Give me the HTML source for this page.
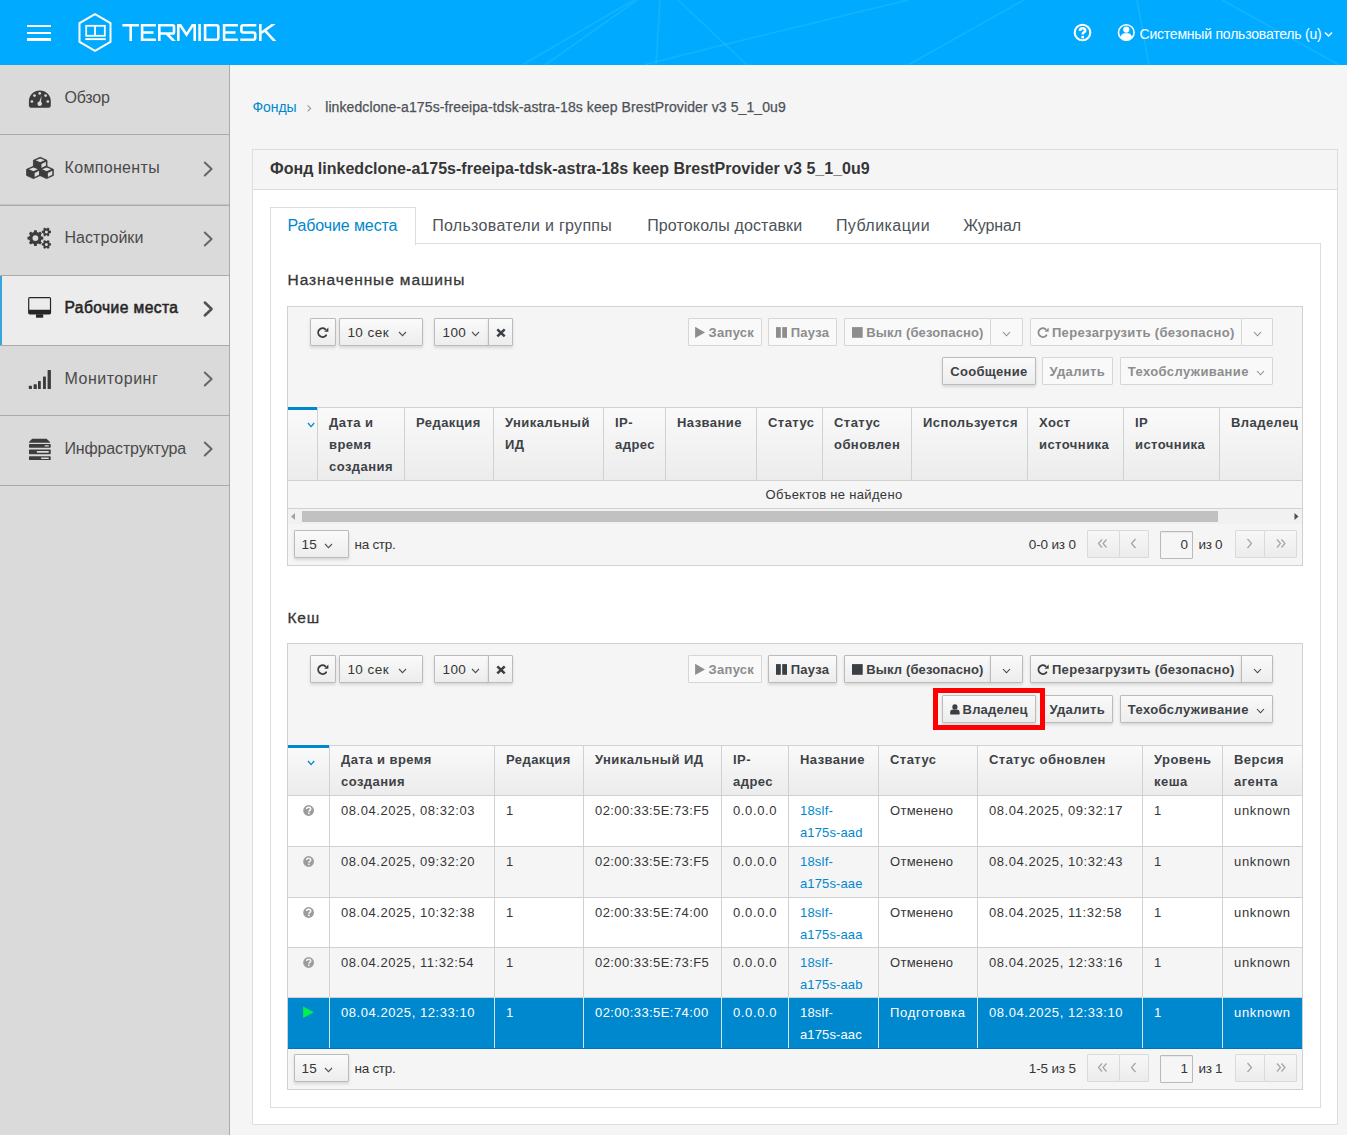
<!DOCTYPE html><html><head><meta charset="utf-8"><title>Termidesk</title><style>
*{box-sizing:border-box}
html,body{margin:0;padding:0}
body{width:1347px;height:1135px;overflow:hidden;position:relative;background:#f5f5f5;font-family:"Liberation Sans",sans-serif;color:#363636}
.t{position:absolute;white-space:nowrap;line-height:20px}
.btn{position:absolute;border:1px solid #bbb;border-radius:1px;background:linear-gradient(#fafafa,#ededed);box-shadow:0 2px 3px rgba(0,0,0,.12)}
.dis{position:absolute;border:1px solid #d6d6d6;border-radius:1px;background:#f9f9f9}
svg{position:absolute;overflow:visible}
</style></head><body>
<div style="position:absolute;left:0px;top:0px;width:1347px;height:65px;background:#00aaff"></div>
<svg style="left:0;top:0" width="1347" height="65"><g stroke="#30c4ff" stroke-opacity="0.4" stroke-width="1.6" fill="none"><line x1="522" y1="65" x2="634" y2="0"/><line x1="545" y1="65" x2="637" y2="0"/><line x1="660" y1="0" x2="656" y2="65"/><line x1="678" y1="0" x2="747" y2="65"/><polyline points="643,65 723,45 908,0"/><line x1="908" y1="65" x2="1024" y2="0"/><line x1="1137" y1="0" x2="1149" y2="65"/><line x1="1222" y1="0" x2="1339" y2="65"/></g></svg>
<div style="position:absolute;left:27px;top:25px;width:24px;height:2px;background:#fff"></div>
<div style="position:absolute;left:27px;top:32px;width:24px;height:2px;background:#fff"></div>
<div style="position:absolute;left:27px;top:38.2px;width:24px;height:2.7px;background:#fff"></div>
<svg style="left:0;top:0" width="300" height="65"><polygon points="95,14.2 110.5,23.1 110.5,41.9 95,50.8 79.5,41.9 79.5,23.1" fill="none" stroke="#fff" stroke-width="2" stroke-linejoin="round"/><rect x="86.2" y="25.8" width="18.6" height="10" fill="none" stroke="#fff" stroke-width="1.8"/><line x1="95" y1="25.8" x2="95" y2="35.8" stroke="#fff" stroke-width="1.8"/><rect x="85.3" y="38.2" width="20.4" height="1.9" fill="#fff"/><defs><clipPath id="lc"><rect x="120" y="24" width="160" height="17"/></clipPath></defs><g clip-path="url(#lc)" fill="none" stroke="#fff" stroke-width="2.6" stroke-linejoin="miter" stroke-miterlimit="6" stroke-linecap="butt"><path d="M122.4 25.3 H138.9 M130.7 25.3 V41"/><path d="M155.9 25.3 H142.1 V39.7 H155.9 M142.1 32.5 H153.5"/><path d="M159.3 41 V25.3 H172.5 Q174 25.3 174 27 V31.9 Q174 33.5 172.5 33.5 H159.3 M166.5 33.5 L175 42"/><path d="M178.3 42 V22 L186.5 34.6 L194.7 22 V42"/><path d="M199.6 24 V41"/><path d="M205.1 25.3 H216.5 Q218.3 25.3 218.3 27.2 V37.8 Q218.3 39.7 216.5 39.7 H205.1 Z"/><path d="M237.9 25.3 H224.1 V39.7 H237.9 M224.1 32.5 H235.5"/><path d="M256.3 25.3 H243.3 Q241.4 25.3 241.4 27.2 V30.8 Q241.4 32.5 243.3 32.5 H253.3 Q255.2 32.5 255.2 34.4 V37.8 Q255.2 39.7 253.3 39.7 H240.3"/><path d="M260.3 24 V41 M261 33 L274.5 23.5 M265 30.6 L275.5 42"/></g></svg>
<svg style="left:1072px;top:22px" width="22" height="22"><circle cx="10.5" cy="10.5" r="7.8" fill="none" stroke="#fff" stroke-width="2.1"/><path d="M8 8.9 Q8 6.2 10.6 6.2 Q13.2 6.2 13.2 8.4 Q13.2 9.7 11.8 10.4 Q10.7 11 10.7 12.5" fill="none" stroke="#fff" stroke-width="2.6"/><rect x="9.4" y="13.9" width="2.6" height="2.4" fill="#fff"/></svg>
<svg style="left:1116px;top:22px" width="22" height="22"><circle cx="10.3" cy="10.5" r="7.8" fill="none" stroke="#fff" stroke-width="1.6"/><circle cx="10.3" cy="7.6" r="3.1" fill="#fff"/><path d="M4.6 15.6 Q5.2 11.6 8.2 11.2 H12.4 Q15.4 11.6 16 15.6 Q13.6 18.4 10.3 18.4 Q7 18.4 4.6 15.6 Z" fill="#fff"/></svg>
<div class="t" style="left:1139.5px;top:24px;font-size:14px;color:#fff;letter-spacing:-0.21px;">Системный пользователь (u)</div>
<svg style="left:1324px;top:31px" width="10" height="8"><path d="M1 1.5 L4.5 5 L8 1.5" fill="none" stroke="#fff" stroke-width="1.5"/></svg>
<div style="position:absolute;left:0px;top:65px;width:229px;height:1070px;background:#dadada"></div>
<div style="position:absolute;left:229px;top:65px;width:1px;height:1070px;background:#aaaaaa"></div>
<div style="position:absolute;left:0px;top:276px;width:229px;height:69px;background:#ececec"></div>
<div style="position:absolute;left:0px;top:276px;width:2px;height:69px;background:#39a5dc"></div>
<div style="position:absolute;left:0px;top:134px;width:229px;height:1px;background:#aaaaaa"></div>
<div style="position:absolute;left:0px;top:205px;width:229px;height:1px;background:#aaaaaa"></div>
<div style="position:absolute;left:0px;top:275px;width:229px;height:1px;background:#aaaaaa"></div>
<div style="position:absolute;left:0px;top:345px;width:229px;height:1px;background:#aaaaaa"></div>
<div style="position:absolute;left:0px;top:415px;width:229px;height:1px;background:#aaaaaa"></div>
<div style="position:absolute;left:0px;top:485px;width:229px;height:1px;background:#aaaaaa"></div>
<div style="position:absolute;left:0px;top:204px;width:229px;height:1px;background:#c4c4c4"></div>
<div class="t" style="left:64.5px;top:88px;font-size:16px;color:#4a4a4a;letter-spacing:-0.2px;">Обзор</div>
<div class="t" style="left:64.5px;top:158px;font-size:16px;color:#4a4a4a;letter-spacing:0.33px;">Компоненты</div>
<svg style="left:203px;top:161px" width="12" height="16"><path d="M1.8 1.5 L8.6 8 L1.8 14.5" fill="none" stroke="#63676b" stroke-width="2" stroke-linecap="round" stroke-linejoin="round"/></svg>
<div class="t" style="left:64.5px;top:228px;font-size:16px;color:#4a4a4a;letter-spacing:0.05px;">Настройки</div>
<svg style="left:203px;top:231px" width="12" height="16"><path d="M1.8 1.5 L8.6 8 L1.8 14.5" fill="none" stroke="#63676b" stroke-width="2" stroke-linecap="round" stroke-linejoin="round"/></svg>
<div class="t" style="left:64.5px;top:298px;font-size:15.6px;color:#262626;letter-spacing:0.42px;-webkit-text-stroke:0.55px #262626;">Рабочие места</div>
<svg style="left:203px;top:301px" width="12" height="16"><path d="M1.8 1.5 L8.6 8 L1.8 14.5" fill="none" stroke="#4d5258" stroke-width="2.5" stroke-linecap="round" stroke-linejoin="round"/></svg>
<div class="t" style="left:64.5px;top:369px;font-size:16px;color:#4a4a4a;letter-spacing:0.5px;">Мониторинг</div>
<svg style="left:203px;top:371px" width="12" height="16"><path d="M1.8 1.5 L8.6 8 L1.8 14.5" fill="none" stroke="#63676b" stroke-width="2" stroke-linecap="round" stroke-linejoin="round"/></svg>
<div class="t" style="left:64.5px;top:439px;font-size:16px;color:#4a4a4a;letter-spacing:-0.15px;">Инфраструктура</div>
<svg style="left:203px;top:441px" width="12" height="16"><path d="M1.8 1.5 L8.6 8 L1.8 14.5" fill="none" stroke="#63676b" stroke-width="2" stroke-linecap="round" stroke-linejoin="round"/></svg>
<svg style="left:28px;top:89px" width="24" height="20"><path d="M0.9 12.35 A10.95 10.95 0 0 1 22.8 12.35 V16.6 Q22.8 18.8 20.6 18.8 H3.1 Q0.9 18.8 0.9 16.6 Z" fill="#3c3c3c"/><g fill="#dadada"><circle cx="11.7" cy="4.4" r="1.35"/><circle cx="6.5" cy="6.6" r="1.35"/><circle cx="17.6" cy="6.6" r="1.35"/><circle cx="3.9" cy="12.5" r="1.35"/><circle cx="19.8" cy="12.5" r="1.35"/><circle cx="11.7" cy="14.8" r="2.3"/><path d="M10.6 14.4 L13.6 6.6 L12.8 15.3 Z"/></g></svg>
<svg style="left:22px;top:152px" width="36" height="30"><path d="M18.2 5.2 L25.0 8.3 V14.5 L18.2 17.6 L11.399999999999999 14.5 V8.3 Z" fill="#3c3c3c" stroke="#3c3c3c" stroke-width="0.8" stroke-linejoin="round"/><path d="M18.2 6.45 L22.7 8.3 L18.2 10.15 L13.7 8.3 Z" fill="#dcdcdc"/><path d="M19.45 11.950000000000001 L23.9 9.75 V13.8 L19.45 16.0 Z" fill="#dcdcdc"/><path d="M11.4 14.2 L18.2 17.3 V23.5 L11.4 26.599999999999998 L4.6000000000000005 23.5 V17.3 Z" fill="#3c3c3c" stroke="#3c3c3c" stroke-width="0.8" stroke-linejoin="round"/><path d="M11.4 15.45 L15.899999999999999 17.3 L11.4 19.15 L6.9 17.3 Z" fill="#dcdcdc"/><path d="M12.65 20.95 L17.099999999999998 18.75 V22.8 L12.65 24.999999999999996 Z" fill="#dcdcdc"/><path d="M24.6 14.2 L31.400000000000002 17.3 V23.5 L24.6 26.599999999999998 L17.8 23.5 V17.3 Z" fill="#3c3c3c" stroke="#3c3c3c" stroke-width="0.8" stroke-linejoin="round"/><path d="M24.6 15.45 L29.1 17.3 L24.6 19.15 L20.1 17.3 Z" fill="#dcdcdc"/><path d="M25.85 20.95 L30.3 18.75 V22.8 L25.85 24.999999999999996 Z" fill="#dcdcdc"/></svg>
<svg style="left:28px;top:227px" width="26" height="24"><g fill="#3c3c3c" fill-rule="evenodd"><path d="M5.81 5.11 L6.09 3.21 L8.71 3.21 L8.99 5.11 L10.51 5.74 L12.05 4.59 L13.91 6.45 L12.76 7.99 L13.39 9.51 L15.29 9.79 L15.29 12.41 L13.39 12.69 L12.76 14.21 L13.91 15.75 L12.05 17.61 L10.51 16.46 L8.99 17.09 L8.71 18.99 L6.09 18.99 L5.81 17.09 L4.29 16.46 L2.75 17.61 L0.89 15.75 L2.04 14.21 L1.41 12.69 L-0.49 12.41 L-0.49 9.79 L1.41 9.51 L2.04 7.99 L0.89 6.45 L2.75 4.59 L4.29 5.74 Z M10.3 11.1 A2.9 2.9 0 1 0 4.5 11.1 A2.9 2.9 0 1 0 10.3 11.1 Z"/><path d="M21.69 3.71 L22.99 3.87 L22.99 5.93 L21.69 6.09 L21.07 7.16 L21.58 8.36 L19.81 9.38 L19.02 8.34 L17.78 8.34 L16.99 9.38 L15.22 8.36 L15.73 7.16 L15.11 6.09 L13.81 5.93 L13.81 3.87 L15.11 3.71 L15.73 2.64 L15.22 1.44 L16.99 0.42 L17.78 1.46 L19.02 1.46 L19.81 0.42 L21.58 1.44 L21.07 2.64 Z M19.9 4.9 A1.5 1.5 0 1 0 16.9 4.9 A1.5 1.5 0 1 0 19.9 4.9 Z"/><path d="M21.69 16.21 L22.99 16.37 L22.99 18.43 L21.69 18.59 L21.07 19.66 L21.58 20.86 L19.81 21.88 L19.02 20.84 L17.78 20.84 L16.99 21.88 L15.22 20.86 L15.73 19.66 L15.11 18.59 L13.81 18.43 L13.81 16.37 L15.11 16.21 L15.73 15.14 L15.22 13.94 L16.99 12.92 L17.78 13.96 L19.02 13.96 L19.81 12.92 L21.58 13.94 L21.07 15.14 Z M19.9 17.4 A1.5 1.5 0 1 0 16.9 17.4 A1.5 1.5 0 1 0 19.9 17.4 Z"/></g></svg>
<svg style="left:27px;top:296px" width="26" height="24"><g fill="#262626"><path fill-rule="evenodd" d="M2.6 1 H22.6 Q24.1 1 24.1 2.5 V16.7 Q24.1 18.4 22.4 18.4 H2.8 Q1.1 18.4 1.1 16.7 V2.5 Q1.1 1 2.6 1 Z M2.3 2.3 V13.7 H22.9 V2.3 Z"/><rect x="9" y="18.3" width="7.2" height="3.4"/></g></svg>
<svg style="left:28px;top:369px" width="24" height="22"><g fill="#3c3c3c"><rect x="0.8" y="16.8" width="3.1" height="3.1" rx="0.5"/><rect x="5.6" y="15.2" width="3.2" height="4.7" rx="0.5"/><rect x="10" y="12.1" width="2.8" height="7.8" rx="0.5"/><rect x="15" y="7.4" width="2.9" height="12.5" rx="0.5"/><rect x="19.6" y="1" width="3.3" height="18.9" rx="0.5"/></g></svg>
<svg style="left:28px;top:437px" width="24" height="26"><g fill="#3c3c3c"><path d="M4.2 1.7 H18.6 L22 5 V5.7 H1 V5 Z"/><rect x="1" y="7" width="21.7" height="3.7" rx="0.7"/><rect x="1" y="12.6" width="21.7" height="4.6" rx="0.7"/><rect x="1" y="19.2" width="21.7" height="3.9" rx="0.7"/></g><g fill="#dadada"><rect x="16.6" y="8.2" width="4.3" height="1.4" rx="0.6"/><rect x="8.7" y="14.1" width="12.2" height="1.7" rx="0.7"/><rect x="13" y="20.5" width="7.9" height="1.4" rx="0.6"/></g></svg>
<div class="t" style="left:252.4px;top:97px;font-size:14px;color:#0088ce;letter-spacing:-0.05px;">Фонды</div>
<svg style="left:306px;top:104px" width="8" height="10"><path d="M1.6 1.4 L4.6 4.4 L1.6 7.4" fill="none" stroke="#9a9c9e" stroke-width="1.2"/></svg>
<div class="t" style="left:325.2px;top:97px;font-size:14px;color:#4d5258;letter-spacing:0.1px;-webkit-text-stroke:0.25px #4d5258;">linkedclone-a175s-freeipa-tdsk-astra-18s keep BrestProvider v3 5_1_0u9</div>
<div style="position:absolute;left:252px;top:149px;width:1086px;height:976px;background:#fff;border:1px solid #dddddd"></div>
<div style="position:absolute;left:253px;top:150px;width:1084px;height:39px;background:#f5f5f5"></div>
<div style="position:absolute;left:253px;top:189px;width:1084px;height:1px;background:#dddddd"></div>
<div class="t" style="left:270px;top:159px;font-size:16px;font-weight:700;color:#363636;letter-spacing:0.02px;">Фонд linkedclone-a175s-freeipa-tdsk-astra-18s keep BrestProvider v3 5_1_0u9</div>
<div style="position:absolute;left:270px;top:243px;width:1051px;height:865px;border:1px solid #dddddd;background:#fff"></div>
<div style="position:absolute;left:270px;top:207px;width:146px;height:38px;border:1px solid #dddddd;border-bottom:none;background:#fff"></div>
<div class="t" style="left:287.4px;top:216px;font-size:16px;color:#0088ce;letter-spacing:-0.1px;">Рабочие места</div>
<div class="t" style="left:432.2px;top:216px;font-size:16px;color:#4d5258;letter-spacing:0.3px;">Пользователи и группы</div>
<div class="t" style="left:647.2px;top:216px;font-size:16px;color:#4d5258;letter-spacing:0.13px;">Протоколы доставки</div>
<div class="t" style="left:835.9px;top:216px;font-size:16px;color:#4d5258;letter-spacing:0.45px;">Публикации</div>
<div class="t" style="left:963.2px;top:216px;font-size:16px;color:#4d5258;letter-spacing:-0.1px;">Журнал</div>
<div class="t" style="left:287.6px;top:270px;font-size:15.5px;color:#363636;letter-spacing:0.9px;-webkit-text-stroke:0.3px #363636;">Назначенные машины</div>
<div style="position:absolute;left:287px;top:306px;width:1016px;height:260px;background:#f5f5f5;border:1px solid #d1d1d1"></div>
<div class="btn" style="left:310px;top:318px;width:26px;height:28px"></div>
<svg style="left:0;top:0" width="1" height="1"><path d="M325.31 329.13 A4.4 4.4 0 1 0 326.07 335.31" fill="none" stroke="#393f44" stroke-width="1.9" stroke-linecap="round"/><path d="M328.40 327.40 L328.40 331.70 L324.20 331.70 Z" fill="#393f44"/></svg>
<div class="btn" style="left:339px;top:318px;width:84px;height:28px"></div>
<div class="t" style="left:347.4px;top:323px;font-size:13.5px;color:#363636;letter-spacing:0.45px;">10 сек</div>
<svg style="left:397.8px;top:331px" width="9" height="5.6"><path d="M1 1 L4.50 4.60 L8 1" fill="none" stroke="#4d5258" stroke-width="1.1"/></svg>
<div class="btn" style="left:434px;top:318px;width:55px;height:28px"></div>
<div class="btn" style="left:488px;top:318px;width:25px;height:28px"></div>
<div class="t" style="left:442.5px;top:323px;font-size:13.5px;color:#363636;letter-spacing:0.4px;">100</div>
<svg style="left:470.6px;top:331px" width="9" height="5.6"><path d="M1 1 L4.50 4.60 L8 1" fill="none" stroke="#4d5258" stroke-width="1.1"/></svg>
<svg style="left:496px;top:328px" width="10" height="10"><path d="M1.3 1.3 L8.7 8.3 M8.7 1.3 L1.3 8.3" stroke="#393f44" stroke-width="2.5"/></svg>
<div class="dis" style="left:688px;top:318px;width:74px;height:28px"></div>
<svg style="left:0;top:0" width="1" height="1"><path d="M695.1 326.8 L705 332.4 L695.1 338 Z" fill="#8b8d8f"/></svg>
<div class="t" style="left:708.5px;top:323px;font-size:13px;font-weight:700;color:#8b8d8f;letter-spacing:0.3px;">Запуск</div>
<div class="dis" style="left:768px;top:318px;width:69px;height:28px"></div>
<svg style="left:0;top:0" width="1" height="1"><rect x="776" y="327.1" width="4.8" height="10.7" fill="#8b8d8f"/><rect x="782.2" y="327.1" width="4.8" height="10.7" fill="#8b8d8f"/></svg>
<div class="t" style="left:790.7px;top:323px;font-size:13px;font-weight:700;color:#8b8d8f;letter-spacing:0.3px;">Пауза</div>
<div class="dis" style="left:844px;top:318px;width:147px;height:28px"></div>
<svg style="left:0;top:0" width="1" height="1"><rect x="852" y="327.1" width="10.7" height="10.7" fill="#8b8d8f"/></svg>
<div class="t" style="left:866.2px;top:323px;font-size:13px;font-weight:700;color:#8b8d8f;letter-spacing:0.14px;">Выкл (безопасно)</div>
<div class="dis" style="left:1030px;top:318px;width:212px;height:28px"></div>
<div class="dis" style="left:1241px;top:318px;width:32px;height:28px"></div>
<svg style="left:1252.5px;top:330.5px" width="9" height="5.8"><path d="M1 1 L4.50 4.80 L8 1" fill="none" stroke="#8b8d8f" stroke-width="1.1"/></svg>
<svg style="left:0;top:0" width="1" height="1"><path d="M1045.61 329.13 A4.4 4.4 0 1 0 1046.37 335.31" fill="none" stroke="#8b8d8f" stroke-width="1.9" stroke-linecap="round"/><path d="M1048.70 327.40 L1048.70 331.70 L1044.50 331.70 Z" fill="#8b8d8f"/></svg>
<div class="t" style="left:1051.9px;top:323px;font-size:13px;font-weight:700;color:#8b8d8f;letter-spacing:0.35px;">Перезагрузить (безопасно)</div>
<div class="dis" style="left:990px;top:318px;width:33px;height:28px"></div>
<svg style="left:1002px;top:330.5px" width="9" height="5.8"><path d="M1 1 L4.50 4.80 L8 1" fill="none" stroke="#8b8d8f" stroke-width="1.1"/></svg>
<div class="btn" style="left:942px;top:357px;width:94px;height:28px"></div>
<div class="t" style="left:950.3px;top:362px;font-size:13px;font-weight:700;color:#3d4246;letter-spacing:0.3px;">Сообщение</div>
<div class="dis" style="left:1042px;top:357px;width:71px;height:28px"></div>
<div class="t" style="left:1049.5px;top:362px;font-size:13px;font-weight:700;color:#8b8d8f;letter-spacing:0.3px;">Удалить</div>
<div class="dis" style="left:1120px;top:357px;width:153px;height:28px"></div>
<div class="t" style="left:1127.8px;top:362px;font-size:13px;font-weight:700;color:#8b8d8f;letter-spacing:0.4px;">Техобслуживание</div>
<svg style="left:1255.5px;top:369.5px" width="9" height="5.8"><path d="M1 1 L4.50 4.80 L8 1" fill="none" stroke="#8b8d8f" stroke-width="1.1"/></svg>
<div style="position:absolute;left:288px;top:407px;width:1014px;height:73px;background:linear-gradient(#fafafa,#ececec)"></div>
<div style="position:absolute;left:288px;top:407px;width:1014px;height:1px;background:#d1d1d1"></div>
<div style="position:absolute;left:288px;top:480px;width:1014px;height:1px;background:#d1d1d1"></div>
<div style="position:absolute;left:317px;top:407px;width:1px;height:73px;background:#d1d1d1"></div>
<div style="position:absolute;left:404px;top:407px;width:1px;height:73px;background:#d1d1d1"></div>
<div style="position:absolute;left:493px;top:407px;width:1px;height:73px;background:#d1d1d1"></div>
<div style="position:absolute;left:603px;top:407px;width:1px;height:73px;background:#d1d1d1"></div>
<div style="position:absolute;left:665px;top:407px;width:1px;height:73px;background:#d1d1d1"></div>
<div style="position:absolute;left:756px;top:407px;width:1px;height:73px;background:#d1d1d1"></div>
<div style="position:absolute;left:822px;top:407px;width:1px;height:73px;background:#d1d1d1"></div>
<div style="position:absolute;left:911px;top:407px;width:1px;height:73px;background:#d1d1d1"></div>
<div style="position:absolute;left:1027px;top:407px;width:1px;height:73px;background:#d1d1d1"></div>
<div style="position:absolute;left:1123px;top:407px;width:1px;height:73px;background:#d1d1d1"></div>
<div style="position:absolute;left:1219px;top:407px;width:1px;height:73px;background:#d1d1d1"></div>
<div style="position:absolute;left:288px;top:407px;width:29px;height:3px;background:#0088ce"></div>
<svg style="left:306.6px;top:421.5px" width="8.2" height="5.6"><path d="M1 1 L4.10 4.60 L7.2 1" fill="none" stroke="#0088ce" stroke-width="1.3"/></svg>
<div class="t" style="left:329px;top:413px;font-size:13px;font-weight:700;color:#3d4246;letter-spacing:0.45px;">Дата и</div>
<div class="t" style="left:329px;top:435px;font-size:13px;font-weight:700;color:#3d4246;letter-spacing:0.45px;">время</div>
<div class="t" style="left:329px;top:457px;font-size:13px;font-weight:700;color:#3d4246;letter-spacing:0.45px;">создания</div>
<div class="t" style="left:416px;top:413px;font-size:13px;font-weight:700;color:#3d4246;letter-spacing:0.45px;">Редакция</div>
<div class="t" style="left:505px;top:413px;font-size:13px;font-weight:700;color:#3d4246;letter-spacing:0.45px;">Уникальный</div>
<div class="t" style="left:505px;top:435px;font-size:13px;font-weight:700;color:#3d4246;letter-spacing:0.45px;">ИД</div>
<div class="t" style="left:615px;top:413px;font-size:13px;font-weight:700;color:#3d4246;letter-spacing:0.45px;">IP-</div>
<div class="t" style="left:615px;top:435px;font-size:13px;font-weight:700;color:#3d4246;letter-spacing:0.45px;">адрес</div>
<div class="t" style="left:677px;top:413px;font-size:13px;font-weight:700;color:#3d4246;letter-spacing:0.45px;">Название</div>
<div class="t" style="left:768px;top:413px;font-size:13px;font-weight:700;color:#3d4246;letter-spacing:0.45px;">Статус</div>
<div class="t" style="left:834px;top:413px;font-size:13px;font-weight:700;color:#3d4246;letter-spacing:0.45px;">Статус</div>
<div class="t" style="left:834px;top:435px;font-size:13px;font-weight:700;color:#3d4246;letter-spacing:0.45px;">обновлен</div>
<div class="t" style="left:923px;top:413px;font-size:13px;font-weight:700;color:#3d4246;letter-spacing:0.45px;">Используется</div>
<div class="t" style="left:1039px;top:413px;font-size:13px;font-weight:700;color:#3d4246;letter-spacing:0.45px;">Хост</div>
<div class="t" style="left:1039px;top:435px;font-size:13px;font-weight:700;color:#3d4246;letter-spacing:0.45px;">источника</div>
<div class="t" style="left:1135px;top:413px;font-size:13px;font-weight:700;color:#3d4246;letter-spacing:0.45px;">IP</div>
<div class="t" style="left:1135px;top:435px;font-size:13px;font-weight:700;color:#3d4246;letter-spacing:0.45px;">источника</div>
<div class="t" style="left:1231px;top:413px;font-size:13px;font-weight:700;color:#3d4246;letter-spacing:0.45px;">Владелец</div>
<div style="position:absolute;left:288px;top:481px;width:1014px;height:27px;background:#f5f5f5"></div>
<div style="position:absolute;left:288px;top:508px;width:1014px;height:1px;background:#d1d1d1"></div>
<div class="t" style="left:765.6px;top:485px;font-size:13px;color:#363636;letter-spacing:0.32px;">Объектов не найдено</div>
<div style="position:absolute;left:288px;top:509px;width:1014px;height:15px;background:#f1f1f1"></div>
<div style="position:absolute;left:302px;top:511px;width:916px;height:11px;background:#c1c1c1"></div>
<svg style="left:0;top:0" width="1" height="1"><path d="M291 516.5 L295 513 L295 520 Z" fill="#a3a3a3"/><path d="M1298.5 516.5 L1294.5 513 L1294.5 520 Z" fill="#505050"/></svg>
<div class="btn" style="left:294px;top:530px;width:55px;height:28px"></div>
<div class="t" style="left:301.5px;top:535px;font-size:13.5px;color:#363636;letter-spacing:0.3px;">15</div>
<svg style="left:323.6px;top:543px" width="9" height="5.6"><path d="M1 1 L4.50 4.60 L8 1" fill="none" stroke="#4d5258" stroke-width="1.1"/></svg>
<div class="t" style="left:354.6px;top:535px;font-size:13.5px;color:#363636;letter-spacing:-0.3px;">на стр.</div>
<div class="t" style="left:1028.8px;top:535px;font-size:13.5px;color:#363636;letter-spacing:-0.15px;">0-0 из 0</div>
<div class="dis" style="left:1087px;top:530px;width:33px;height:28px;background:linear-gradient(#f7f7f7,#ececec);border-color:#dadada"></div>
<div class="dis" style="left:1119px;top:530px;width:30px;height:28px;background:linear-gradient(#f7f7f7,#ececec);border-color:#dadada"></div>
<div class="dis" style="left:1235px;top:530px;width:30px;height:28px;background:linear-gradient(#f7f7f7,#ececec);border-color:#dadada"></div>
<div class="dis" style="left:1264px;top:530px;width:33px;height:28px;background:linear-gradient(#f7f7f7,#ececec);border-color:#dadada"></div>
<svg style="left:0;top:0" width="1" height="1"><g fill="none" stroke="#a0a3a6" stroke-width="1.2"><path d="M1102 539.5 L1098.5 543.5 L1102 547.5 M1106.5 539.5 L1103 543.5 L1106.5 547.5"/><path d="M1135.5 539.0 L1131.5 543.5 L1135.5 548.0"/><path d="M1247.5 539.0 L1251.5 543.5 L1247.5 548.0"/><path d="M1277 539.5 L1280.5 543.5 L1277 547.5 M1281.5 539.5 L1285 543.5 L1281.5 547.5"/></g></svg>
<div style="position:absolute;left:1160px;top:531px;width:33px;height:28px;border:1px solid #bababa;border-radius:1px;background:#f6f6f6;box-shadow:inset 0 1px 1px rgba(0,0,0,.06)"></div>
<div class="t" style="left:1180.5px;top:535px;font-size:13.5px;color:#363636;">0</div>
<div class="t" style="left:1198.5px;top:535px;font-size:13.5px;color:#363636;letter-spacing:-0.3px;">из 0</div>
<div class="t" style="left:287.6px;top:608px;font-size:15.5px;color:#363636;letter-spacing:0.7px;-webkit-text-stroke:0.3px #363636;">Кеш</div>
<div style="position:absolute;left:287px;top:643px;width:1016px;height:447px;background:#f5f5f5;border:1px solid #d1d1d1"></div>
<div class="btn" style="left:310px;top:655px;width:26px;height:28px"></div>
<svg style="left:0;top:0" width="1" height="1"><path d="M325.31 666.13 A4.4 4.4 0 1 0 326.07 672.31" fill="none" stroke="#393f44" stroke-width="1.9" stroke-linecap="round"/><path d="M328.40 664.40 L328.40 668.70 L324.20 668.70 Z" fill="#393f44"/></svg>
<div class="btn" style="left:339px;top:655px;width:84px;height:28px"></div>
<div class="t" style="left:347.4px;top:660px;font-size:13.5px;color:#363636;letter-spacing:0.45px;">10 сек</div>
<svg style="left:397.8px;top:668px" width="9" height="5.6"><path d="M1 1 L4.50 4.60 L8 1" fill="none" stroke="#4d5258" stroke-width="1.1"/></svg>
<div class="btn" style="left:434px;top:655px;width:55px;height:28px"></div>
<div class="btn" style="left:488px;top:655px;width:25px;height:28px"></div>
<div class="t" style="left:442.5px;top:660px;font-size:13.5px;color:#363636;letter-spacing:0.4px;">100</div>
<svg style="left:470.6px;top:668px" width="9" height="5.6"><path d="M1 1 L4.50 4.60 L8 1" fill="none" stroke="#4d5258" stroke-width="1.1"/></svg>
<svg style="left:496px;top:665px" width="10" height="10"><path d="M1.3 1.3 L8.7 8.3 M8.7 1.3 L1.3 8.3" stroke="#393f44" stroke-width="2.5"/></svg>
<div class="dis" style="left:688px;top:655px;width:74px;height:28px"></div>
<svg style="left:0;top:0" width="1" height="1"><path d="M695.1 663.8 L705 669.4 L695.1 675 Z" fill="#8b8d8f"/></svg>
<div class="t" style="left:708.5px;top:660px;font-size:13px;font-weight:700;color:#8b8d8f;letter-spacing:0.3px;">Запуск</div>
<div class="btn" style="left:768px;top:655px;width:69px;height:28px"></div>
<svg style="left:0;top:0" width="1" height="1"><rect x="776" y="664.1" width="4.8" height="10.7" fill="#393f44"/><rect x="782.2" y="664.1" width="4.8" height="10.7" fill="#393f44"/></svg>
<div class="t" style="left:790.7px;top:660px;font-size:13px;font-weight:700;color:#3d4246;letter-spacing:0.3px;">Пауза</div>
<div class="btn" style="left:844px;top:655px;width:147px;height:28px"></div>
<svg style="left:0;top:0" width="1" height="1"><rect x="852" y="664.1" width="10.7" height="10.7" fill="#393f44"/></svg>
<div class="t" style="left:866.2px;top:660px;font-size:13px;font-weight:700;color:#3d4246;letter-spacing:0.14px;">Выкл (безопасно)</div>
<div class="btn" style="left:1030px;top:655px;width:212px;height:28px"></div>
<div class="btn" style="left:1241px;top:655px;width:32px;height:28px"></div>
<svg style="left:1252.5px;top:667.5px" width="9" height="5.8"><path d="M1 1 L4.50 4.80 L8 1" fill="none" stroke="#393f44" stroke-width="1.1"/></svg>
<svg style="left:0;top:0" width="1" height="1"><path d="M1045.61 666.13 A4.4 4.4 0 1 0 1046.37 672.31" fill="none" stroke="#393f44" stroke-width="1.9" stroke-linecap="round"/><path d="M1048.70 664.40 L1048.70 668.70 L1044.50 668.70 Z" fill="#393f44"/></svg>
<div class="t" style="left:1051.9px;top:660px;font-size:13px;font-weight:700;color:#3d4246;letter-spacing:0.35px;">Перезагрузить (безопасно)</div>
<div class="btn" style="left:990px;top:655px;width:33px;height:28px"></div>
<svg style="left:1002px;top:667.5px" width="9" height="5.8"><path d="M1 1 L4.50 4.80 L8 1" fill="none" stroke="#393f44" stroke-width="1.1"/></svg>
<div class="btn" style="left:942px;top:695px;width:94px;height:28px"></div>
<svg style="left:949.5px;top:703.5px" width="11" height="12"><circle cx="4.9" cy="2.9" r="2.6" fill="#393f44"/><path d="M0.2 10.6 V8.6 Q0.2 5.6 3 5.6 H6.8 Q9.6 5.6 9.6 8.6 V10.6 Z" fill="#393f44"/></svg>
<div class="t" style="left:962.6px;top:700px;font-size:13px;font-weight:700;color:#3d4246;letter-spacing:0.17px;">Владелец</div>
<div class="btn" style="left:1042px;top:695px;width:71px;height:28px"></div>
<div class="t" style="left:1049.5px;top:700px;font-size:13px;font-weight:700;color:#3d4246;letter-spacing:0.3px;">Удалить</div>
<div class="btn" style="left:1120px;top:695px;width:153px;height:28px"></div>
<div class="t" style="left:1127.8px;top:700px;font-size:13px;font-weight:700;color:#3d4246;letter-spacing:0.4px;">Техобслуживание</div>
<svg style="left:1255.5px;top:707.5px" width="9" height="5.8"><path d="M1 1 L4.50 4.80 L8 1" fill="none" stroke="#393f44" stroke-width="1.1"/></svg>
<div style="position:absolute;left:933px;top:688px;width:112px;height:42px;border:5px solid #ff0000"></div>
<div style="position:absolute;left:288px;top:795px;width:1014px;height:51px;background:#ffffff"></div>
<div style="position:absolute;left:288px;top:846px;width:1014px;height:51px;background:#f5f5f5"></div>
<div style="position:absolute;left:288px;top:897px;width:1014px;height:50px;background:#ffffff"></div>
<div style="position:absolute;left:288px;top:947px;width:1014px;height:50px;background:#f5f5f5"></div>
<div style="position:absolute;left:288px;top:997px;width:1014px;height:51px;background:#0088ce"></div>
<div style="position:absolute;left:329px;top:795px;width:1px;height:51px;background:#d1d1d1"></div>
<div style="position:absolute;left:494px;top:795px;width:1px;height:51px;background:#d1d1d1"></div>
<div style="position:absolute;left:583px;top:795px;width:1px;height:51px;background:#d1d1d1"></div>
<div style="position:absolute;left:721px;top:795px;width:1px;height:51px;background:#d1d1d1"></div>
<div style="position:absolute;left:788px;top:795px;width:1px;height:51px;background:#d1d1d1"></div>
<div style="position:absolute;left:878px;top:795px;width:1px;height:51px;background:#d1d1d1"></div>
<div style="position:absolute;left:977px;top:795px;width:1px;height:51px;background:#d1d1d1"></div>
<div style="position:absolute;left:1142px;top:795px;width:1px;height:51px;background:#d1d1d1"></div>
<div style="position:absolute;left:1222px;top:795px;width:1px;height:51px;background:#d1d1d1"></div>
<div style="position:absolute;left:288px;top:846px;width:1014px;height:1px;background:#d1d1d1"></div>
<div style="position:absolute;left:329px;top:846px;width:1px;height:51px;background:#d1d1d1"></div>
<div style="position:absolute;left:494px;top:846px;width:1px;height:51px;background:#d1d1d1"></div>
<div style="position:absolute;left:583px;top:846px;width:1px;height:51px;background:#d1d1d1"></div>
<div style="position:absolute;left:721px;top:846px;width:1px;height:51px;background:#d1d1d1"></div>
<div style="position:absolute;left:788px;top:846px;width:1px;height:51px;background:#d1d1d1"></div>
<div style="position:absolute;left:878px;top:846px;width:1px;height:51px;background:#d1d1d1"></div>
<div style="position:absolute;left:977px;top:846px;width:1px;height:51px;background:#d1d1d1"></div>
<div style="position:absolute;left:1142px;top:846px;width:1px;height:51px;background:#d1d1d1"></div>
<div style="position:absolute;left:1222px;top:846px;width:1px;height:51px;background:#d1d1d1"></div>
<div style="position:absolute;left:288px;top:897px;width:1014px;height:1px;background:#d1d1d1"></div>
<div style="position:absolute;left:329px;top:897px;width:1px;height:50px;background:#d1d1d1"></div>
<div style="position:absolute;left:494px;top:897px;width:1px;height:50px;background:#d1d1d1"></div>
<div style="position:absolute;left:583px;top:897px;width:1px;height:50px;background:#d1d1d1"></div>
<div style="position:absolute;left:721px;top:897px;width:1px;height:50px;background:#d1d1d1"></div>
<div style="position:absolute;left:788px;top:897px;width:1px;height:50px;background:#d1d1d1"></div>
<div style="position:absolute;left:878px;top:897px;width:1px;height:50px;background:#d1d1d1"></div>
<div style="position:absolute;left:977px;top:897px;width:1px;height:50px;background:#d1d1d1"></div>
<div style="position:absolute;left:1142px;top:897px;width:1px;height:50px;background:#d1d1d1"></div>
<div style="position:absolute;left:1222px;top:897px;width:1px;height:50px;background:#d1d1d1"></div>
<div style="position:absolute;left:288px;top:947px;width:1014px;height:1px;background:#d1d1d1"></div>
<div style="position:absolute;left:329px;top:947px;width:1px;height:50px;background:#d1d1d1"></div>
<div style="position:absolute;left:494px;top:947px;width:1px;height:50px;background:#d1d1d1"></div>
<div style="position:absolute;left:583px;top:947px;width:1px;height:50px;background:#d1d1d1"></div>
<div style="position:absolute;left:721px;top:947px;width:1px;height:50px;background:#d1d1d1"></div>
<div style="position:absolute;left:788px;top:947px;width:1px;height:50px;background:#d1d1d1"></div>
<div style="position:absolute;left:878px;top:947px;width:1px;height:50px;background:#d1d1d1"></div>
<div style="position:absolute;left:977px;top:947px;width:1px;height:50px;background:#d1d1d1"></div>
<div style="position:absolute;left:1142px;top:947px;width:1px;height:50px;background:#d1d1d1"></div>
<div style="position:absolute;left:1222px;top:947px;width:1px;height:50px;background:#d1d1d1"></div>
<div style="position:absolute;left:288px;top:997px;width:1014px;height:1px;background:#d1d1d1"></div>
<div style="position:absolute;left:329px;top:997px;width:1px;height:51px;background:#d6e6f2"></div>
<div style="position:absolute;left:494px;top:997px;width:1px;height:51px;background:#d6e6f2"></div>
<div style="position:absolute;left:583px;top:997px;width:1px;height:51px;background:#d6e6f2"></div>
<div style="position:absolute;left:721px;top:997px;width:1px;height:51px;background:#d6e6f2"></div>
<div style="position:absolute;left:788px;top:997px;width:1px;height:51px;background:#d6e6f2"></div>
<div style="position:absolute;left:878px;top:997px;width:1px;height:51px;background:#d6e6f2"></div>
<div style="position:absolute;left:977px;top:997px;width:1px;height:51px;background:#d6e6f2"></div>
<div style="position:absolute;left:1142px;top:997px;width:1px;height:51px;background:#d6e6f2"></div>
<div style="position:absolute;left:1222px;top:997px;width:1px;height:51px;background:#d6e6f2"></div>
<div style="position:absolute;left:288px;top:1048px;width:1014px;height:1px;background:#0075b5"></div>
<div class="t" style="left:341px;top:801px;font-size:13px;color:#363636;letter-spacing:0.56px;">08.04.2025, 08:32:03</div>
<div class="t" style="left:506px;top:801px;font-size:13px;color:#363636;letter-spacing:0.5px;">1</div>
<div class="t" style="left:595px;top:801px;font-size:13px;color:#363636;letter-spacing:0.43px;">02:00:33:5E:73:F5</div>
<div class="t" style="left:733px;top:801px;font-size:13px;color:#363636;letter-spacing:0.64px;">0.0.0.0</div>
<div class="t" style="left:800px;top:801px;font-size:13px;color:#0088ce;letter-spacing:0.2px;">18slf-</div>
<div class="t" style="left:800px;top:823px;font-size:13px;color:#0088ce;letter-spacing:0.12px;">a175s-aad</div>
<div class="t" style="left:890px;top:801px;font-size:13px;color:#363636;letter-spacing:0.29px;">Отменено</div>
<div class="t" style="left:989px;top:801px;font-size:13px;color:#363636;letter-spacing:0.56px;">08.04.2025, 09:32:17</div>
<div class="t" style="left:1154px;top:801px;font-size:13px;color:#363636;letter-spacing:0.5px;">1</div>
<div class="t" style="left:1234px;top:801px;font-size:13px;color:#363636;letter-spacing:0.66px;">unknown</div>
<svg style="left:0;top:0" width="1" height="1"><circle cx="308.6" cy="810.5" r="5.4" fill="#9c9c9c"/><path d="M306.6 809.1 Q306.6 807.2 308.6 807.2 Q310.7 807.2 310.7 809.0 Q310.7 810.0 309.5 810.6 Q308.9 811.0 308.9 811.8" fill="none" stroke="#ffffff" stroke-width="1.5"/><rect x="308.1" y="812.6" width="1.6" height="1.5" fill="#ffffff"/></svg>
<div class="t" style="left:341px;top:852px;font-size:13px;color:#363636;letter-spacing:0.56px;">08.04.2025, 09:32:20</div>
<div class="t" style="left:506px;top:852px;font-size:13px;color:#363636;letter-spacing:0.5px;">1</div>
<div class="t" style="left:595px;top:852px;font-size:13px;color:#363636;letter-spacing:0.43px;">02:00:33:5E:73:F5</div>
<div class="t" style="left:733px;top:852px;font-size:13px;color:#363636;letter-spacing:0.64px;">0.0.0.0</div>
<div class="t" style="left:800px;top:852px;font-size:13px;color:#0088ce;letter-spacing:0.2px;">18slf-</div>
<div class="t" style="left:800px;top:874px;font-size:13px;color:#0088ce;letter-spacing:0.12px;">a175s-aae</div>
<div class="t" style="left:890px;top:852px;font-size:13px;color:#363636;letter-spacing:0.29px;">Отменено</div>
<div class="t" style="left:989px;top:852px;font-size:13px;color:#363636;letter-spacing:0.56px;">08.04.2025, 10:32:43</div>
<div class="t" style="left:1154px;top:852px;font-size:13px;color:#363636;letter-spacing:0.5px;">1</div>
<div class="t" style="left:1234px;top:852px;font-size:13px;color:#363636;letter-spacing:0.66px;">unknown</div>
<svg style="left:0;top:0" width="1" height="1"><circle cx="308.6" cy="861.5" r="5.4" fill="#9c9c9c"/><path d="M306.6 860.1 Q306.6 858.2 308.6 858.2 Q310.7 858.2 310.7 860.0 Q310.7 861.0 309.5 861.6 Q308.9 862.0 308.9 862.8" fill="none" stroke="#f5f5f5" stroke-width="1.5"/><rect x="308.1" y="863.6" width="1.6" height="1.5" fill="#f5f5f5"/></svg>
<div class="t" style="left:341px;top:903px;font-size:13px;color:#363636;letter-spacing:0.56px;">08.04.2025, 10:32:38</div>
<div class="t" style="left:506px;top:903px;font-size:13px;color:#363636;letter-spacing:0.5px;">1</div>
<div class="t" style="left:595px;top:903px;font-size:13px;color:#363636;letter-spacing:0.43px;">02:00:33:5E:74:00</div>
<div class="t" style="left:733px;top:903px;font-size:13px;color:#363636;letter-spacing:0.64px;">0.0.0.0</div>
<div class="t" style="left:800px;top:903px;font-size:13px;color:#0088ce;letter-spacing:0.2px;">18slf-</div>
<div class="t" style="left:800px;top:925px;font-size:13px;color:#0088ce;letter-spacing:0.12px;">a175s-aaa</div>
<div class="t" style="left:890px;top:903px;font-size:13px;color:#363636;letter-spacing:0.29px;">Отменено</div>
<div class="t" style="left:989px;top:903px;font-size:13px;color:#363636;letter-spacing:0.56px;">08.04.2025, 11:32:58</div>
<div class="t" style="left:1154px;top:903px;font-size:13px;color:#363636;letter-spacing:0.5px;">1</div>
<div class="t" style="left:1234px;top:903px;font-size:13px;color:#363636;letter-spacing:0.66px;">unknown</div>
<svg style="left:0;top:0" width="1" height="1"><circle cx="308.6" cy="912.5" r="5.4" fill="#9c9c9c"/><path d="M306.6 911.1 Q306.6 909.2 308.6 909.2 Q310.7 909.2 310.7 911.0 Q310.7 912.0 309.5 912.6 Q308.9 913.0 308.9 913.8" fill="none" stroke="#ffffff" stroke-width="1.5"/><rect x="308.1" y="914.6" width="1.6" height="1.5" fill="#ffffff"/></svg>
<div class="t" style="left:341px;top:953px;font-size:13px;color:#363636;letter-spacing:0.56px;">08.04.2025, 11:32:54</div>
<div class="t" style="left:506px;top:953px;font-size:13px;color:#363636;letter-spacing:0.5px;">1</div>
<div class="t" style="left:595px;top:953px;font-size:13px;color:#363636;letter-spacing:0.43px;">02:00:33:5E:73:F5</div>
<div class="t" style="left:733px;top:953px;font-size:13px;color:#363636;letter-spacing:0.64px;">0.0.0.0</div>
<div class="t" style="left:800px;top:953px;font-size:13px;color:#0088ce;letter-spacing:0.2px;">18slf-</div>
<div class="t" style="left:800px;top:975px;font-size:13px;color:#0088ce;letter-spacing:0.12px;">a175s-aab</div>
<div class="t" style="left:890px;top:953px;font-size:13px;color:#363636;letter-spacing:0.29px;">Отменено</div>
<div class="t" style="left:989px;top:953px;font-size:13px;color:#363636;letter-spacing:0.56px;">08.04.2025, 12:33:16</div>
<div class="t" style="left:1154px;top:953px;font-size:13px;color:#363636;letter-spacing:0.5px;">1</div>
<div class="t" style="left:1234px;top:953px;font-size:13px;color:#363636;letter-spacing:0.66px;">unknown</div>
<svg style="left:0;top:0" width="1" height="1"><circle cx="308.6" cy="962.5" r="5.4" fill="#9c9c9c"/><path d="M306.6 961.1 Q306.6 959.2 308.6 959.2 Q310.7 959.2 310.7 961.0 Q310.7 962.0 309.5 962.6 Q308.9 963.0 308.9 963.8" fill="none" stroke="#f5f5f5" stroke-width="1.5"/><rect x="308.1" y="964.6" width="1.6" height="1.5" fill="#f5f5f5"/></svg>
<div class="t" style="left:341px;top:1003px;font-size:13px;color:#ffffff;letter-spacing:0.56px;">08.04.2025, 12:33:10</div>
<div class="t" style="left:506px;top:1003px;font-size:13px;color:#ffffff;letter-spacing:0.5px;">1</div>
<div class="t" style="left:595px;top:1003px;font-size:13px;color:#ffffff;letter-spacing:0.43px;">02:00:33:5E:74:00</div>
<div class="t" style="left:733px;top:1003px;font-size:13px;color:#ffffff;letter-spacing:0.64px;">0.0.0.0</div>
<div class="t" style="left:800px;top:1003px;font-size:13px;color:#ffffff;letter-spacing:0.2px;">18slf-</div>
<div class="t" style="left:800px;top:1025px;font-size:13px;color:#ffffff;letter-spacing:0.12px;">a175s-aac</div>
<div class="t" style="left:890px;top:1003px;font-size:13px;color:#ffffff;letter-spacing:0.72px;">Подготовка</div>
<div class="t" style="left:989px;top:1003px;font-size:13px;color:#ffffff;letter-spacing:0.56px;">08.04.2025, 12:33:10</div>
<div class="t" style="left:1154px;top:1003px;font-size:13px;color:#ffffff;letter-spacing:0.5px;">1</div>
<div class="t" style="left:1234px;top:1003px;font-size:13px;color:#ffffff;letter-spacing:0.66px;">unknown</div>
<svg style="left:0;top:0" width="1" height="1"><path d="M303.1 1006.6 L313.9 1012.2 L303.1 1017.9 Z" fill="#00f050"/></svg>
<div style="position:absolute;left:288px;top:745px;width:1014px;height:50px;background:linear-gradient(#fafafa,#ececec)"></div>
<div style="position:absolute;left:288px;top:745px;width:1014px;height:1px;background:#d1d1d1"></div>
<div style="position:absolute;left:288px;top:795px;width:1014px;height:1px;background:#d1d1d1"></div>
<div style="position:absolute;left:329px;top:745px;width:1px;height:50px;background:#d1d1d1"></div>
<div style="position:absolute;left:494px;top:745px;width:1px;height:50px;background:#d1d1d1"></div>
<div style="position:absolute;left:583px;top:745px;width:1px;height:50px;background:#d1d1d1"></div>
<div style="position:absolute;left:721px;top:745px;width:1px;height:50px;background:#d1d1d1"></div>
<div style="position:absolute;left:788px;top:745px;width:1px;height:50px;background:#d1d1d1"></div>
<div style="position:absolute;left:878px;top:745px;width:1px;height:50px;background:#d1d1d1"></div>
<div style="position:absolute;left:977px;top:745px;width:1px;height:50px;background:#d1d1d1"></div>
<div style="position:absolute;left:1142px;top:745px;width:1px;height:50px;background:#d1d1d1"></div>
<div style="position:absolute;left:1222px;top:745px;width:1px;height:50px;background:#d1d1d1"></div>
<div style="position:absolute;left:288px;top:745px;width:41px;height:3px;background:#0088ce"></div>
<svg style="left:306.6px;top:759.5px" width="8.2" height="5.6"><path d="M1 1 L4.10 4.60 L7.2 1" fill="none" stroke="#0088ce" stroke-width="1.3"/></svg>
<div class="t" style="left:341px;top:750px;font-size:13px;font-weight:700;color:#3d4246;letter-spacing:0.45px;">Дата и время</div>
<div class="t" style="left:341px;top:772px;font-size:13px;font-weight:700;color:#3d4246;letter-spacing:0.45px;">создания</div>
<div class="t" style="left:506px;top:750px;font-size:13px;font-weight:700;color:#3d4246;letter-spacing:0.45px;">Редакция</div>
<div class="t" style="left:595px;top:750px;font-size:13px;font-weight:700;color:#3d4246;letter-spacing:0.45px;">Уникальный ИД</div>
<div class="t" style="left:733px;top:750px;font-size:13px;font-weight:700;color:#3d4246;letter-spacing:0.45px;">IP-</div>
<div class="t" style="left:733px;top:772px;font-size:13px;font-weight:700;color:#3d4246;letter-spacing:0.45px;">адрес</div>
<div class="t" style="left:800px;top:750px;font-size:13px;font-weight:700;color:#3d4246;letter-spacing:0.45px;">Название</div>
<div class="t" style="left:890px;top:750px;font-size:13px;font-weight:700;color:#3d4246;letter-spacing:0.45px;">Статус</div>
<div class="t" style="left:989px;top:750px;font-size:13px;font-weight:700;color:#3d4246;letter-spacing:0.45px;">Статус обновлен</div>
<div class="t" style="left:1154px;top:750px;font-size:13px;font-weight:700;color:#3d4246;letter-spacing:0.45px;">Уровень</div>
<div class="t" style="left:1154px;top:772px;font-size:13px;font-weight:700;color:#3d4246;letter-spacing:0.45px;">кеша</div>
<div class="t" style="left:1234px;top:750px;font-size:13px;font-weight:700;color:#3d4246;letter-spacing:0.45px;">Версия</div>
<div class="t" style="left:1234px;top:772px;font-size:13px;font-weight:700;color:#3d4246;letter-spacing:0.45px;">агента</div>
<div class="btn" style="left:294px;top:1054px;width:55px;height:28px"></div>
<div class="t" style="left:301.5px;top:1059px;font-size:13.5px;color:#363636;letter-spacing:0.3px;">15</div>
<svg style="left:323.6px;top:1067px" width="9" height="5.6"><path d="M1 1 L4.50 4.60 L8 1" fill="none" stroke="#4d5258" stroke-width="1.1"/></svg>
<div class="t" style="left:354.6px;top:1059px;font-size:13.5px;color:#363636;letter-spacing:-0.3px;">на стр.</div>
<div class="t" style="left:1028.8px;top:1059px;font-size:13.5px;color:#363636;letter-spacing:-0.15px;">1-5 из 5</div>
<div class="dis" style="left:1087px;top:1054px;width:33px;height:28px;background:linear-gradient(#f7f7f7,#ececec);border-color:#dadada"></div>
<div class="dis" style="left:1119px;top:1054px;width:30px;height:28px;background:linear-gradient(#f7f7f7,#ececec);border-color:#dadada"></div>
<div class="dis" style="left:1235px;top:1054px;width:30px;height:28px;background:linear-gradient(#f7f7f7,#ececec);border-color:#dadada"></div>
<div class="dis" style="left:1264px;top:1054px;width:33px;height:28px;background:linear-gradient(#f7f7f7,#ececec);border-color:#dadada"></div>
<svg style="left:0;top:0" width="1" height="1"><g fill="none" stroke="#a0a3a6" stroke-width="1.2"><path d="M1102 1063.5 L1098.5 1067.5 L1102 1071.5 M1106.5 1063.5 L1103 1067.5 L1106.5 1071.5"/><path d="M1135.5 1063.0 L1131.5 1067.5 L1135.5 1072.0"/><path d="M1247.5 1063.0 L1251.5 1067.5 L1247.5 1072.0"/><path d="M1277 1063.5 L1280.5 1067.5 L1277 1071.5 M1281.5 1063.5 L1285 1067.5 L1281.5 1071.5"/></g></svg>
<div style="position:absolute;left:1160px;top:1055px;width:33px;height:28px;border:1px solid #bababa;border-radius:1px;background:#f6f6f6;box-shadow:inset 0 1px 1px rgba(0,0,0,.06)"></div>
<div class="t" style="left:1180.5px;top:1059px;font-size:13.5px;color:#363636;">1</div>
<div class="t" style="left:1198.5px;top:1059px;font-size:13.5px;color:#363636;letter-spacing:-0.3px;">из 1</div>
</body></html>
